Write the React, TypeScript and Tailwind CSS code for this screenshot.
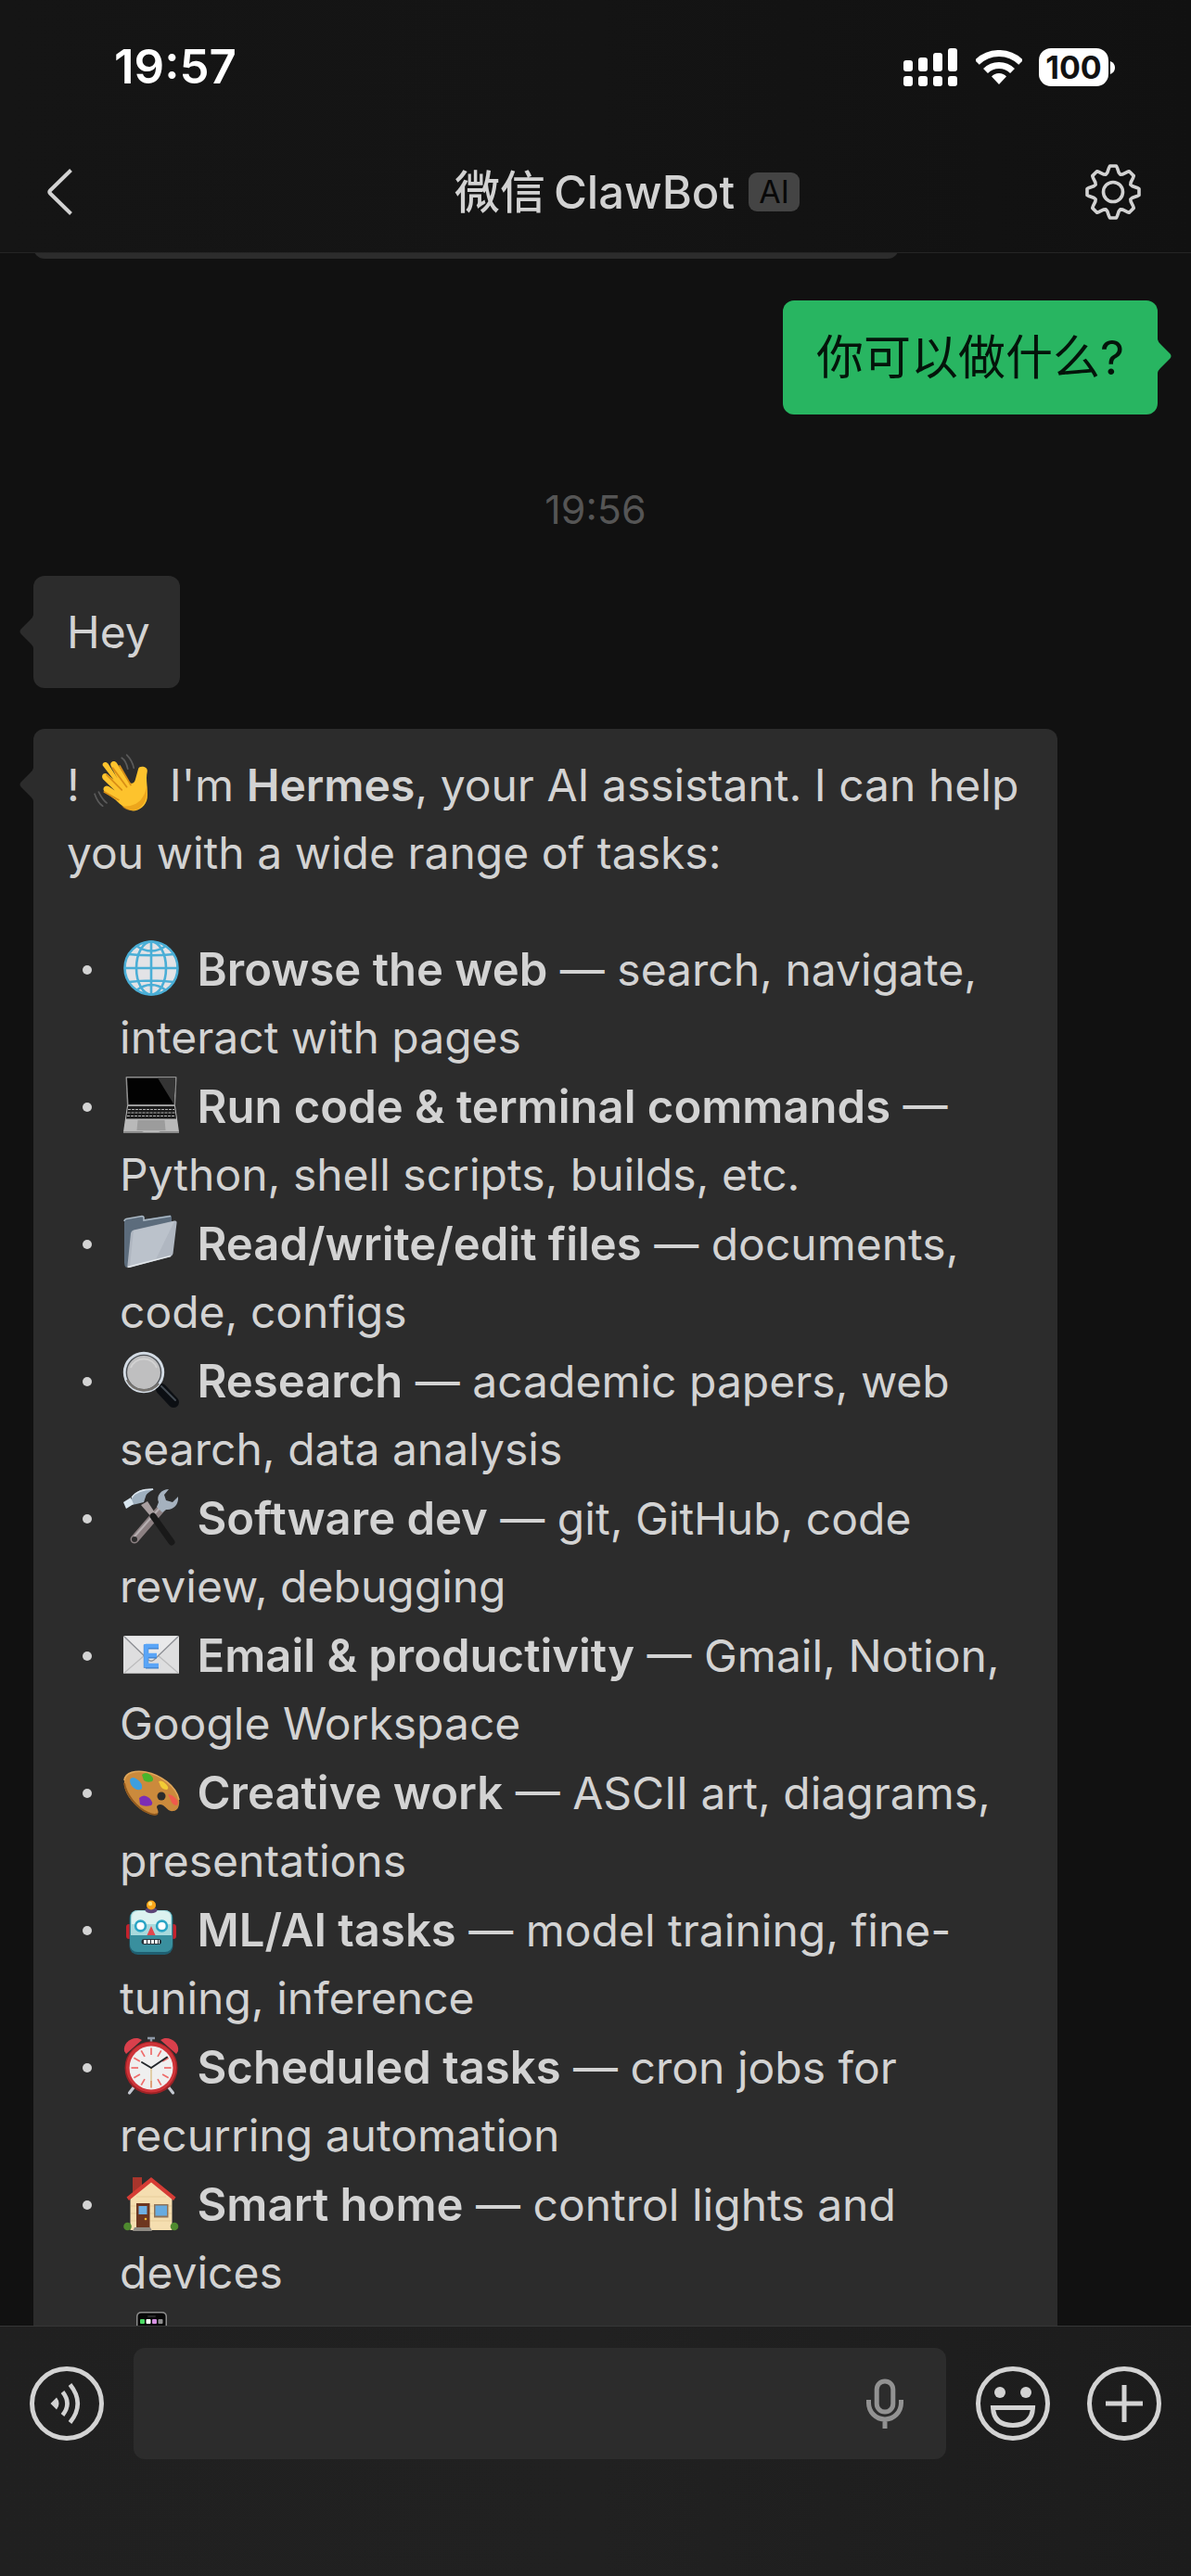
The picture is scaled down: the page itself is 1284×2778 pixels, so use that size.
import { useState } from 'react'
import type { ReactNode } from 'react'

type Capability = {
  icon: string
  title: string
  detail: string
}

const CAPABILITIES: Capability[] = [
  { icon: 'globe', title: 'Browse the web', detail: 'search, navigate, interact with pages' },
  { icon: 'laptop', title: 'Run code & terminal commands', detail: 'Python, shell scripts, builds, etc.' },
  { icon: 'folder', title: 'Read/write/edit files', detail: 'documents, code, configs' },
  { icon: 'magnifier', title: 'Research', detail: 'academic papers, web search, data analysis' },
  { icon: 'tools', title: 'Software dev', detail: 'git, GitHub, code review, debugging' },
  { icon: 'email', title: 'Email & productivity', detail: 'Gmail, Notion, Google Workspace' },
  { icon: 'palette', title: 'Creative work', detail: 'ASCII art, diagrams, presentations' },
  { icon: 'robot', title: 'ML/AI tasks', detail: 'model training, fine-tuning, inference' },
  { icon: 'alarm', title: 'Scheduled tasks', detail: 'cron jobs for recurring automation' },
  { icon: 'house', title: 'Smart home', detail: 'control lights and devices' }
]

const polar = (deg: number, r: number) => {
  const a = (deg * Math.PI) / 180
  return `${(32 + r * Math.sin(a)).toFixed(2)} ${(32 - r * Math.cos(a)).toFixed(2)}`
}

// eight teeth, one every 45 degrees
const GEAR_PATH =
  'M' +
  Array.from({ length: 8 }, (_, i) => i * 45)
    .flatMap((d) => [
      polar(d - 16.5, 21.8),
      polar(d - 10, 26.2),
      polar(d - 7, 28.2),
      polar(d + 7, 28.2),
      polar(d + 10, 26.2),
      polar(d + 16.5, 21.8),
      polar(d + 22.5, 20.4)
    ])
    .join('L') +
  'Z'

const ticks = Array.from({ length: 12 }, (_, i) => i * 30)

const EMOJI: Record<string, ReactNode> = {
  wave: (
    <g transform="translate(-2 -1) scale(1.08)">
      <path
        d="M5 5.500C4 2.500 8.500 1 10.500 4L21 20.500C18.500 16 14 8 13 5.500C12 1.500 17 0 19 3L31 21.500C33 24.500 36.500 24 37.500 20L40.500 9C41.500 5 50.500 6.500 49.500 11.500C47.500 20 50.500 28 49.500 38C48.500 46 41 51 35.500 51C29 50 23 45 18 40L7.500 32.500C3.500 29 7 24.500 11 26.500L17 30.500L5.500 19.500C2.500 15.500 6.500 11.500 10 14.500L16 20Z"
        transform="translate(4 6)"
        fill="#fdc32d"
      />
      <path d="M13 21L28 36M10.500 38L25 46M19 14L33 33M26 12L37 31" stroke="#d98e16" strokeWidth="1.600" fill="none" strokeLinecap="round" />
      <path d="M28 52C34 58 42 58 48 52C54 46 53 38 53 32C51 44 44 54 28 52Z" fill="#e59a16" opacity=".7" />
      <path d="M28 4C31 6 33 10 34 15M33 1C37 5 39 9 40 14M1 40C3 46 6 50 9 52M5 38C7 42 9 46 13 49" stroke="#5a5a5a" strokeWidth="1.600" fill="none" strokeLinecap="round" />
    </g>
  ),
  globe: (
    <>
      <circle cx="30" cy="31" r="28.500" fill="#e3e3e6" />
      <g fill="none" stroke="#4aaed6" strokeWidth="2.600">
        <circle cx="30" cy="31" r="28.500" />
        <ellipse cx="30" cy="31" rx="16" ry="28.500" />
        <path d="M30 2V60M1 31H59M5 16Q30 18.500 55 16M6 46Q30 43 54 46M14 7Q30 18 46 7M14 55Q30 43 46 55" />
      </g>
    </>
  ),
  laptop: (
    <>
      <path d="M3.500 0H56.500Q57.500 0 57.500 1L56 32H4L2.500 1Q2.500 0 3.500 0Z" fill="#8e8e8e" />
      <path d="M4 1.500H56L54.500 30H5.500Z" fill="#020202" />
      <path d="M37 1.500H56L54.500 30Z" fill="#343434" />
      <path d="M4 31.500H56L60 59.500Q60 61 58.500 61H1.500Q0 61 0 59.500Z" fill="#b9b9b9" />
      <path d="M5 32H55L57 45.500H3Z" fill="#1b1b1b" />
      <path d="M5 35.500H55M4.500 39H55.500M4 42.500H56" stroke="#b5b5b5" strokeWidth="1.200" strokeDasharray="3 1" />
      <path d="M15.500 47H44.500L45.500 58H14.500Z" fill="#9c9c9c" />
      <path d="M0 59H20L22 60H38L40 59H60V60.500Q60 61 59 61H1Q0 61 0 60.500Z" fill="#8a8a8a" />
    </>
  ),
  folder: (
    <>
      <path d="M1 8Q1 6 3 5.500L20 2.500Q22 2.500 22 4.500V6L50 1.500Q52 1.500 52 3.500V10L9 55L3 58Q1 56 1 53Z" fill="#5c6c7c" />
      <path d="M1 8Q1 6 3 5.500L20 2.500Q22 2.500 22 4.500V7L51 2.500" fill="none" stroke="#a9b7c3" strokeWidth="1.600" />
      <path d="M8 21Q8.500 18 11 17.500L55 7.500Q58 7 57.500 10L53.500 43Q53 45 51 46L7 58Q4 58.500 4.500 55Z" fill="#b0b7c1" />
      <path d="M11 18L55 8L35 49L7 57Z" fill="#c3c9d2" opacity=".6" />
      <path d="M4.500 57.500L51 45.500" stroke="#e2e6ea" strokeWidth="1.400" />
    </>
  ),
  magnifier: (
    <>
      <path d="M36 36L42 42" stroke="#9a9a9a" strokeWidth="7" />
      <path d="M41 41L54 55" stroke="#0c0f13" strokeWidth="12" strokeLinecap="round" />
      <path d="M41 38L56 53" stroke="#454c54" strokeWidth="2" strokeLinecap="round" />
      <circle cx="22" cy="23" r="20.500" fill="#bfbfc0" stroke="#d3dbe4" strokeWidth="3.400" />
      <circle cx="22" cy="23" r="18.600" fill="none" stroke="#4f5358" strokeWidth="1.400" />
      <path d="M4 31A20.500 20.500 0 0 0 38 35" fill="none" stroke="#76736f" strokeWidth="2.600" />
      <path d="M8 18A15 15 0 0 1 36 18" fill="none" stroke="#d2d2d2" strokeWidth="2" />
    </>
  ),
  tools: (
    <>
      <path d="M44 18L12 55" stroke="#8c8082" strokeWidth="9" strokeLinecap="round" />
      <path d="M42 18L12 52" stroke="#b7b0b2" strokeWidth="2" strokeLinecap="round" />
      <circle cx="12" cy="55" r="3" fill="#2c2c2c" />
      <path d="M49 1C41 1 35 8 38 15L36 20L42 26L46 23C53 24 60 18 59 9L53 15L46 13L44 7Z" fill="#a5b1be" />
      <path d="M19 18L26 14L35 28L31 32Z" fill="#a99fa0" />
      <path d="M32 30L52 58" stroke="#191919" strokeWidth="7" strokeLinecap="round" />
      <path d="M9 10C13 3 21 0 33 1C30 3 25 5 24 9L22 15L14 17L9 18Z" fill="#9fb0bf" />
      <path d="M0 15L8 10L11 17L3 22Z" fill="#d9e6ef" />
      <path d="M9 10C13 4 22 1 32 1" stroke="#dce6ee" strokeWidth="1.400" fill="none" />
    </>
  ),
  email: (
    <>
      <rect x="0" y="11" width="60" height="41" rx="1.500" fill="#dededf" />
      <path d="M1 51L23 32M59 51L37 32" stroke="#bcbcbd" strokeWidth="1.200" />
      <path d="M1 12L27 37Q30 39.500 33 37L59 12" fill="#e9e9ea" stroke="#8f9196" strokeWidth="1.400" />
      <path d="M0 51.500H60" stroke="#a8a8a8" strokeWidth="1.200" />
      <path d="M24 22H38M24 32H36M24 43H38M24.500 20V45" stroke="#3f7fc8" strokeWidth="5.400" transform="translate(0 .8)" />
      <path d="M24 22H38M24 32H36M24 43H38M24.500 20V45" stroke="#5aa5f7" strokeWidth="4.600" />
    </>
  ),
  palette: (
    <>
      <path
        d="M1 19C2 10 14 8 24 10C40 13 57 25 60 40C61 47 58 52 54 52C49 53 47 49 43 46C40 44 36 45 36 48C37 51 39 54 36 56C30 58 17 51 9 41C3 34 0 26 1 19Z"
        fill="#cb8a3c"
      />
      <path d="M1 19C2 10 14 8 24 10C40 13 57 25 60 40" fill="none" stroke="#e0a75a" strokeWidth="1.600" />
      <path d="M1 22C3 34 14 49 27 54Q33 57 37 55" fill="none" stroke="#8f581e" strokeWidth="1.800" />
      <circle cx="41" cy="36" r="4.500" fill="#2c2c2c" />
      <path d="M7 18Q10 14 15 18Q21 22 20 28Q16 31 11 27Q7 24 7 18Z" fill="#3c9fe0" />
      <path d="M20 13Q24 9 29 13Q34 17 31 20Q26 22 22 19Z" fill="#47b52c" />
      <path d="M38 20Q42 18 46 23Q50 27 47 29Q42 29 40 25Z" fill="#f3cc35" />
      <path d="M48 34Q53 34 58 40Q60 45 57 46Q52 45 51 40Z" fill="#f05a4c" />
      <path d="M17 38Q22 33 28 38Q33 43 30 46Q23 48 18 45Z" fill="#7c2db5" />
    </>
  ),
  robot: (
    <>
      <rect x="3" y="26" width="54" height="16" rx="3" fill="#c5222c" />
      <rect x="6.500" y="11" width="47" height="48" rx="9" fill="#1f5f71" />
      <rect x="7" y="11" width="46" height="45" rx="8" fill="#398f9e" />
      <path d="M8 38V19Q8 11 16 11H44Q52 11 52 19V38Z" fill="#a9dadd" />
      <path d="M9 26V19Q9 12 16 12H44Q51 12 51 19V26Z" fill="#dcf2f0" />
      <ellipse cx="30" cy="11" rx="6.500" ry="3.200" fill="#5b4577" />
      <circle cx="30" cy="5.500" r="5" fill="#f9a51a" />
      <circle cx="29" cy="4" r="2.200" fill="#ffe07a" />
      <g fill="#fff" stroke="#2ba5c5" strokeWidth="2.600">
        <circle cx="18.500" cy="28" r="5.400" />
        <circle cx="41.500" cy="28" r="5.400" />
      </g>
      <path d="M30 28L34.500 38H25.500Z" fill="#e2474d" />
      <rect x="19.500" y="42" width="21.500" height="6" rx="3" fill="#27323a" />
      <path d="M22 45H39" stroke="#fff" strokeWidth="4" strokeDasharray="3 1" />
    </>
  ),
  alarm: (
    <>
      <path d="M12 53L6.500 60M48 53L53.500 60" stroke="#c4c8d0" strokeWidth="3.200" strokeLinecap="round" />
      <path d="M26 1H34M30 1V6" stroke="#8d97a5" strokeWidth="2.400" />
      <path d="M1 15C-1 5 12 -3 20 3L3 18Z" fill="#d9404c" />
      <path d="M59 15C61 5 48 -3 40 3L57 18Z" fill="#d9404c" />
      <circle cx="30" cy="33" r="28.500" fill="#9d2226" />
      <circle cx="30" cy="32.500" r="27" fill="#cf3439" />
      <circle cx="30" cy="33" r="23.500" fill="#efefef" />
      <g stroke="#ee6a68" strokeWidth="1.700">
        {ticks.map((d) => (
          <path key={d} d="M30 11.500V19" transform={`rotate(${d} 30 33)`} />
        ))}
      </g>
      <path d="M30 33V54" stroke="#d5b877" strokeWidth="1.200" />
      <path d="M30 33L20 27M30 33L47 21.500" stroke="#24282c" strokeWidth="2" strokeLinecap="round" />
    </>
  ),
  house: (
    <>
      <path d="M10 3H20V14L10 22Z" fill="#a8352c" />
      <path d="M7.500 26L30 6L52.500 26V60H7.500Z" fill="#f5deb0" />
      <path d="M8 34H52M8 42H52M8 50H52M14 24H46" stroke="#e7cd9b" strokeWidth="1" />
      <path d="M30 3L56.500 24.500L54 28L30 8.500L6 28L3.500 24.500Z" fill="#d63c35" />
      <rect x="14" y="31" width="14.500" height="27" fill="#6d3620" />
      <rect x="16.500" y="34" width="9" height="9" fill="#6fb0e3" />
      <circle cx="24" cy="48" r="1.300" fill="#f2b632" />
      <rect x="33" y="32" width="15.500" height="14.500" fill="#8f7358" />
      <rect x="34.500" y="33.500" width="12.500" height="11" fill="#67abe0" />
      <path d="M12 57H29L31 61H10Z" fill="#8f8b84" />
      <circle cx="4.500" cy="56" r="4.300" fill="#4f8a2f" />
      <circle cx="55" cy="56" r="4.300" fill="#4f8a2f" />
    </>
  ),
  phone: (
    <>
      <rect x="14" y="0" width="33" height="62" rx="5" fill="#8c8c8c" />
      <rect x="15.500" y="1.500" width="30" height="59" rx="4" fill="#070707" />
      <rect x="26" y="4" width="9" height="2" rx="1" fill="#2a2a2a" />
      <rect x="18" y="8" width="5" height="5" rx="1" fill="#4bd964" />
      <rect x="24.500" y="8" width="5" height="5" rx="1" fill="#fff" />
      <rect x="31" y="8" width="5" height="5" rx="1" fill="#d48fe0" />
      <rect x="37.500" y="8" width="5" height="5" rx="1" fill="#8e8e8e" />
    </>
  )
}

function Emoji({ name }: { name: string }) {
  return (
    <svg
      role="img"
      aria-label={name}
      viewBox="0 0 60 62"
      className="mr-[6px] ml-1 inline-block h-[62px] w-[60px] overflow-visible align-[-12px]"
    >
      {EMOJI[name]}
    </svg>
  )
}

function StatusBar() {
  return (
    <div className="flex h-[145px] items-center justify-between pr-[82px] pl-[123px] text-white">
      <time className="text-[51px] font-semibold">19:57</time>
      <div className="flex items-center">
        <svg viewBox="0 0 58 41" className="h-[41px] w-[58px]" fill="currentColor" aria-label="Signal">
          {[13, 10, 5, 0].map((y, i) => (
            <g key={y}>
              <rect x={i * 16} y={y} width="10" height={25 - y} rx="3" />
              <rect x={i * 16} y="30" width="10" height="11" rx="3" />
            </g>
          ))}
        </svg>
        <svg viewBox="0 0 50 37" className="ml-5 h-[37px] w-[50px]" fill="none" aria-label="Wi-Fi">
          <g stroke="currentColor" strokeWidth="7">
            <path d="M1.300 13.300A33.500 33.500 0 0 1 48.700 13.300" />
            <path d="M10.500 22.500A20.500 20.500 0 0 1 39.500 22.500" />
          </g>
          <path d="M17 28.500Q20 25 25 25Q30 25 33 28.500L25 37Z" fill="currentColor" />
        </svg>
        <div className="ml-[18px] flex h-[41px] w-[75px] items-center justify-center rounded-[13px] bg-white text-[34px] font-bold text-[#121212]">
          100
        </div>
        <svg viewBox="0 0 5 14" className="ml-[2px] h-[14px] w-[5px]" fill="currentColor" aria-hidden="true">
          <path d="M0 0Q5 2 5 7T0 14Z" />
        </svg>
      </div>
    </div>
  )
}

function TitleBar() {
  return (
    <div className="flex h-[127px] items-center justify-between pr-[52px] pb-[3px] pl-[50px] text-[#d2d2d2]">
      <button type="button" aria-label="Back" className="flex h-16 w-16 items-center">
        <svg viewBox="0 0 30 64" className="h-16 w-[30px]" fill="none" stroke="currentColor" strokeWidth="4">
          <path d="M26.500 8.500L4 30.500Q2.500 32 4 33.500L26.500 55.500" />
        </svg>
      </button>
      <h1 className="relative flex gap-[9px] text-[49px] leading-[73px] font-medium whitespace-nowrap">
        <span>微信</span>
        <span>ClawBot</span>
        <span className="absolute top-[15px] left-full ml-[15px] flex h-[42px] w-[55px] items-center justify-center rounded-[9px] bg-[#444444] text-[34px] font-normal text-[#080808]">
          AI
        </span>
      </h1>
      <button type="button" aria-label="Settings" className="flex h-16 w-16 items-center justify-center">
        <svg viewBox="0 0 64 64" className="h-16 w-16" fill="none" stroke="currentColor" strokeWidth="3.600" strokeLinejoin="round">
          <path d={GEAR_PATH} />
          <circle cx="32" cy="32" r="10.500" />
        </svg>
      </button>
    </div>
  )
}

function Received({ children }: { children: ReactNode }) {
  return (
    <div className="relative w-fit rounded-xl bg-[#2c2c2c] py-6 pr-8 pl-9 text-[48px] leading-[73px] text-[#d3d3d3]">
      <svg viewBox="0 0 15 36" className="absolute top-[42px] right-full h-9 w-[15px]" fill="#2c2c2c" aria-hidden="true">
        <path d="M15 0Q14.500 2.500 12 5L1.500 15.500Q-.5 18 1.500 20.500L12 31Q14.500 33.500 15 36Z" />
      </svg>
      {children}
    </div>
  )
}

function Sent({ children }: { children: ReactNode }) {
  return (
    <div className="relative w-fit self-end rounded-xl bg-[#28b561] px-9 py-6 text-[51px] leading-[75px] text-[#04140a]">
      <svg viewBox="0 0 15 36" className="absolute top-[42px] left-full h-9 w-[15px]" fill="#28b561" aria-hidden="true">
        <path d="M0 0Q.5 2.500 3 5L13.500 15.500Q15.500 18 13.500 20.500L3 31Q.5 33.500 0 36Z" />
      </svg>
      {children}
    </div>
  )
}

function Bullet({ icon, children }: { icon: string; children?: ReactNode }) {
  return (
    <li className="flex">
      <span className="mt-8 mr-[30px] ml-[17px] h-[10px] w-[10px] shrink-0 rounded-full bg-[#d3d3d3]" />
      <p>
        <Emoji name={icon} /> {children}
      </p>
    </li>
  )
}

function Composer() {
  const [text, setText] = useState('')

  return (
    <footer className="flex h-[270px] shrink-0 items-start border-t border-[#363737] bg-linear-to-r from-[#202020] via-[#212121] to-[#1c1c1c] px-8 pt-[23px] text-[#d3d3d3]">
      <div className="flex h-[120px] w-full items-center">
        <button type="button" aria-label="Voice message" className="h-20 w-20 shrink-0">
          <svg viewBox="0 0 80 80" className="h-20 w-20" fill="none" stroke="currentColor" strokeWidth="5">
            <circle cx="40" cy="40" r="37.500" />
            <path d="M22.500 40L29 33.500Q34 40 29 46.500Z" fill="currentColor" stroke="none" />
            <path d="M35.500 27.500Q45.500 40 35.500 52.500M43.500 19.500Q60 40 43.500 60.500" strokeWidth="4.600" />
          </svg>
        </button>
        <div className="ml-8 flex h-[120px] min-w-0 flex-1 items-center rounded-xl bg-[#2c2c2c] pr-[46px]">
          <input
            type="text"
            aria-label="Message"
            value={text}
            onChange={(e) => setText(e.target.value)}
            className="h-full min-w-0 flex-1 bg-transparent px-6 text-[48px] outline-none"
          />
          <button type="button" aria-label="Dictate" className="text-[#929292]">
            <svg viewBox="0 0 40 54" className="h-[54px] w-10" fill="none" stroke="currentColor" strokeWidth="5">
              <rect x="11.200" y="3" width="17.600" height="33" rx="8.800" />
              <path d="M2.500 23V26.500A17.500 17.500 0 0 0 37.500 26.500V23M20 44V54" />
            </svg>
          </button>
        </div>
        <button type="button" aria-label="Stickers" className="ml-8 h-20 w-20 shrink-0">
          <svg viewBox="0 0 80 80" className="h-20 w-20" fill="none" stroke="currentColor" strokeWidth="5">
            <circle cx="40" cy="40" r="37.500" />
            <circle cx="26" cy="28" r="6" fill="currentColor" stroke="none" />
            <circle cx="54" cy="28" r="6" fill="currentColor" stroke="none" />
            <path d="M18.500 44.500H61.500Q60.500 63.500 40 63.500T18.500 44.500Z" />
          </svg>
        </button>
        <button type="button" aria-label="More" className="ml-10 h-20 w-20 shrink-0">
          <svg viewBox="0 0 80 80" className="h-20 w-20" fill="none" stroke="currentColor" strokeWidth="5">
            <circle cx="40" cy="40" r="37.500" />
            <path d="M20 40H60M40 20V60" />
          </svg>
        </button>
      </div>
    </footer>
  )
}

export default function App() {
  return (
    <div className="flex h-screen flex-col overflow-hidden bg-[#111111] font-['Inter','Noto_Sans_CJK_SC',sans-serif]">
      <header className="shrink-0 border-b border-[#252525] bg-linear-to-r from-[#151515] via-[#141414] to-[#111111]">
        <StatusBar />
        <TitleBar />
      </header>

      <main className="flex min-h-0 flex-1 flex-col overflow-hidden px-9">
        {/* tail of the previous message, scrolled under the header */}
        <div className="-mt-[42px] h-12 w-[77%] shrink-0 rounded-xl bg-[#2c2c2c]" />

        <div className="mt-[45px] flex shrink-0 flex-col">
          <Sent>你可以做什么?</Sent>
        </div>

        <time className="mt-[87px] mb-[57px] shrink-0 text-center text-[43px] leading-[30px] text-[#555555]">19:56</time>

        <div className="flex shrink-0 flex-col gap-11">
          <Received>Hey</Received>
          <div className="mr-[108px]">
            <Received>
              <p>
                ! <Emoji name="wave" /> I'm <strong className="font-semibold">Hermes</strong>, your AI assistant. I can
                help you with a wide range of tasks:
              </p>
              <ul className="mt-[53px] flex flex-col gap-[2px]">
                {CAPABILITIES.map((c) => (
                  <Bullet key={c.title} icon={c.icon}>
                    <strong className="text-[49px] font-semibold">{c.title}</strong> — {c.detail}
                  </Bullet>
                ))}
                <Bullet icon="phone" />
              </ul>
            </Received>
          </div>
        </div>
      </main>

      <Composer />
    </div>
  )
}
